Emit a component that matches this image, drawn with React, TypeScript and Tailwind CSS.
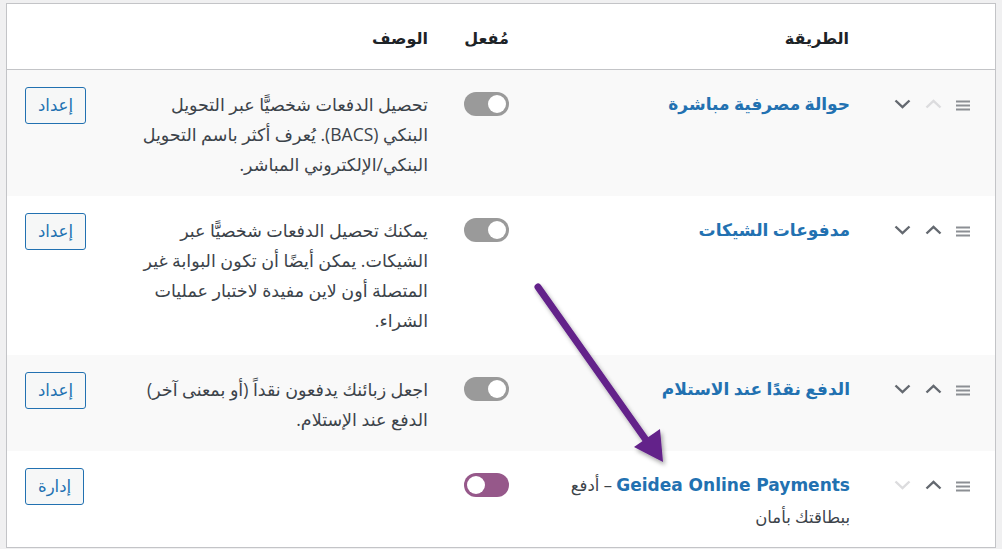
import type { ReactNode } from 'react'

const font = { fontFamily: '"Open Sans", "DejaVu Sans", sans-serif' }
const dejavu = { fontFamily: '"DejaVu Sans", sans-serif' }

function Toggle({ on }: { on: boolean }) {
    return (
        <div
            className={`w-[45px] h-[24px] rounded-full p-[3px] flex ${on ? 'bg-[#96588a] justify-end' : 'bg-[#9a9a9a] justify-start'}`}
        >
            <div className="w-[18px] h-[18px] rounded-full bg-white" />
        </div>
    )
}

function Chevron({ up, disabled }: { up?: boolean; disabled?: boolean }) {
    return (
        <svg width="17" height="10" viewBox="0 0 17 10" fill="none">
            <path
                d={up ? 'M1.5 8.5 L8.5 1.8 L15.5 8.5' : 'M1.5 1.5 L8.5 8.2 L15.5 1.5'}
                stroke={disabled ? '#dcdcde' : '#646970'}
                strokeWidth="2.4"
            />
        </svg>
    )
}

function Handle() {
    return (
        <svg width="14" height="11" viewBox="0 0 14 11">
            <rect x="0" y="0.5" width="14" height="2" fill="#8c8f94" />
            <rect x="0" y="4.5" width="14" height="2" fill="#8c8f94" />
            <rect x="0" y="8.5" width="14" height="2" fill="#8c8f94" />
        </svg>
    )
}

type Row = {
    name: ReactNode
    desc: string[]
    on: boolean
    action: string
    upDisabled?: boolean
    downDisabled?: boolean
    height: string
    bg: string
}

const rows: Row[] = [
    {
        name: 'حوالة مصرفية مباشرة',
        desc: ['تحصيل الدفعات شخصيًّا عبر التحويل', 'البنكي (BACS). يُعرف أكثر باسم التحويل', 'البنكي/الإلكتروني المباشر.'],
        on: false,
        action: 'إعداد',
        upDisabled: true,
        height: 'h-[126px]',
        bg: 'bg-[#f9f9f9]',
    },
    {
        name: 'مدفوعات الشيكات',
        desc: ['يمكنك تحصيل الدفعات شخصيًّا عبر', 'الشيكات. يمكن أيضًا أن تكون البوابة غير', 'المتصلة أون لاين مفيدة لاختبار عمليات', 'الشراء.'],
        on: false,
        action: 'إعداد',
        height: 'h-[159px]',
        bg: 'bg-white',
    },
    {
        name: 'الدفع نقدًا عند الاستلام',
        desc: ['اجعل زبائنك يدفعون نقداً (أو بمعنى آخر)', 'الدفع عند الإستلام.'],
        on: false,
        action: 'إعداد',
        height: 'h-[96px]',
        bg: 'bg-[#f9f9f9]',
    },
    {
        name: (
            <>
                <span className="font-bold text-[#2271b1] text-[17px]" style={dejavu}>Geidea Online Payments</span>
                <span className="text-[#3c434a]"> – أدفع</span>
                <br />
                <span className="text-[#3c434a]">ببطاقتك بأمان</span>
            </>
        ),
        desc: [],
        on: true,
        action: 'إدارة',
        downDisabled: true,
        height: 'h-[96px]',
        bg: 'bg-white',
    },
]

const cols = 'grid grid-cols-[125px_341px_81px_329px_1fr]'

export default function App() {
    return (
        <div className="relative w-[1002px] h-[549px] bg-[#f0f0f1] pt-[3px] pl-[6px] overflow-hidden" style={font}>
            <div dir="rtl" className="w-[990px] border border-[#c3c4c7] bg-white">
                {/* header */}
                <div className={`${cols} h-[66px] items-center border-b border-[#c3c4c7] text-[16px] font-bold text-[#1d2327] pt-[3px]`}>
                    <div />
                    <div className="pr-[21px]">الطريقة</div>
                    <div className="pr-[20px]">مُفعل</div>
                    <div className="pr-[20px]">الوصف</div>
                    <div />
                </div>

                {rows.map((r, i) => (
                    <div key={i} className={`${cols} ${r.height} ${r.bg}`}>
                        <div className="pr-[25px] pt-[29px] flex items-start gap-[14px]">
                            <div className="pt-[1px]"><Handle /></div>
                            <div className="flex gap-[14px]">
                                <Chevron up disabled={r.upDisabled} />
                                <Chevron disabled={r.downDisabled} />
                            </div>
                        </div>
                        <div className="pr-[20px] pt-[18px] text-[17px] leading-[32px] font-bold text-[#2271b1]">
                            {typeof r.name === 'string' ? r.name : <div className="font-normal text-[16.5px]">{r.name}</div>}
                        </div>
                        <div className="pr-[20px] pt-[22px]">
                            <Toggle on={r.on} />
                        </div>
                        <div className="pr-[20px] pt-[19px] text-[17.5px] leading-[30px] text-[#3c434a]">
                            {r.desc.map((l, j) => (
                                <div key={j} className="whitespace-nowrap">{l}</div>
                            ))}
                        </div>
                        <div className="pl-[18px] pt-[17px] flex justify-end">
                            <button className="h-[37px] px-[12px] rounded-[3px] border border-[#2271b1] bg-[#f6f7f7] text-[#2271b1] text-[16.5px]">
                                {r.action}
                            </button>
                        </div>
                    </div>
                ))}
            </div>

            {/* annotation arrow */}
            <svg className="absolute left-0 top-0 pointer-events-none" width="1002" height="549" viewBox="0 0 1002 549">
                <defs>
                    <filter id="sh" x="-20%" y="-20%" width="140%" height="140%">
                        <feDropShadow dx="2" dy="3" stdDeviation="2" floodColor="#000" floodOpacity="0.35" />
                    </filter>
                </defs>
                <g filter="url(#sh)">
                    <line x1="538" y1="287" x2="646" y2="440" stroke="#63218a" strokeWidth="7" strokeLinecap="round" />
                    <polygon points="634,447 660,429 663,462" fill="#63218a" />
                </g>
            </svg>
        </div>
    )
}
